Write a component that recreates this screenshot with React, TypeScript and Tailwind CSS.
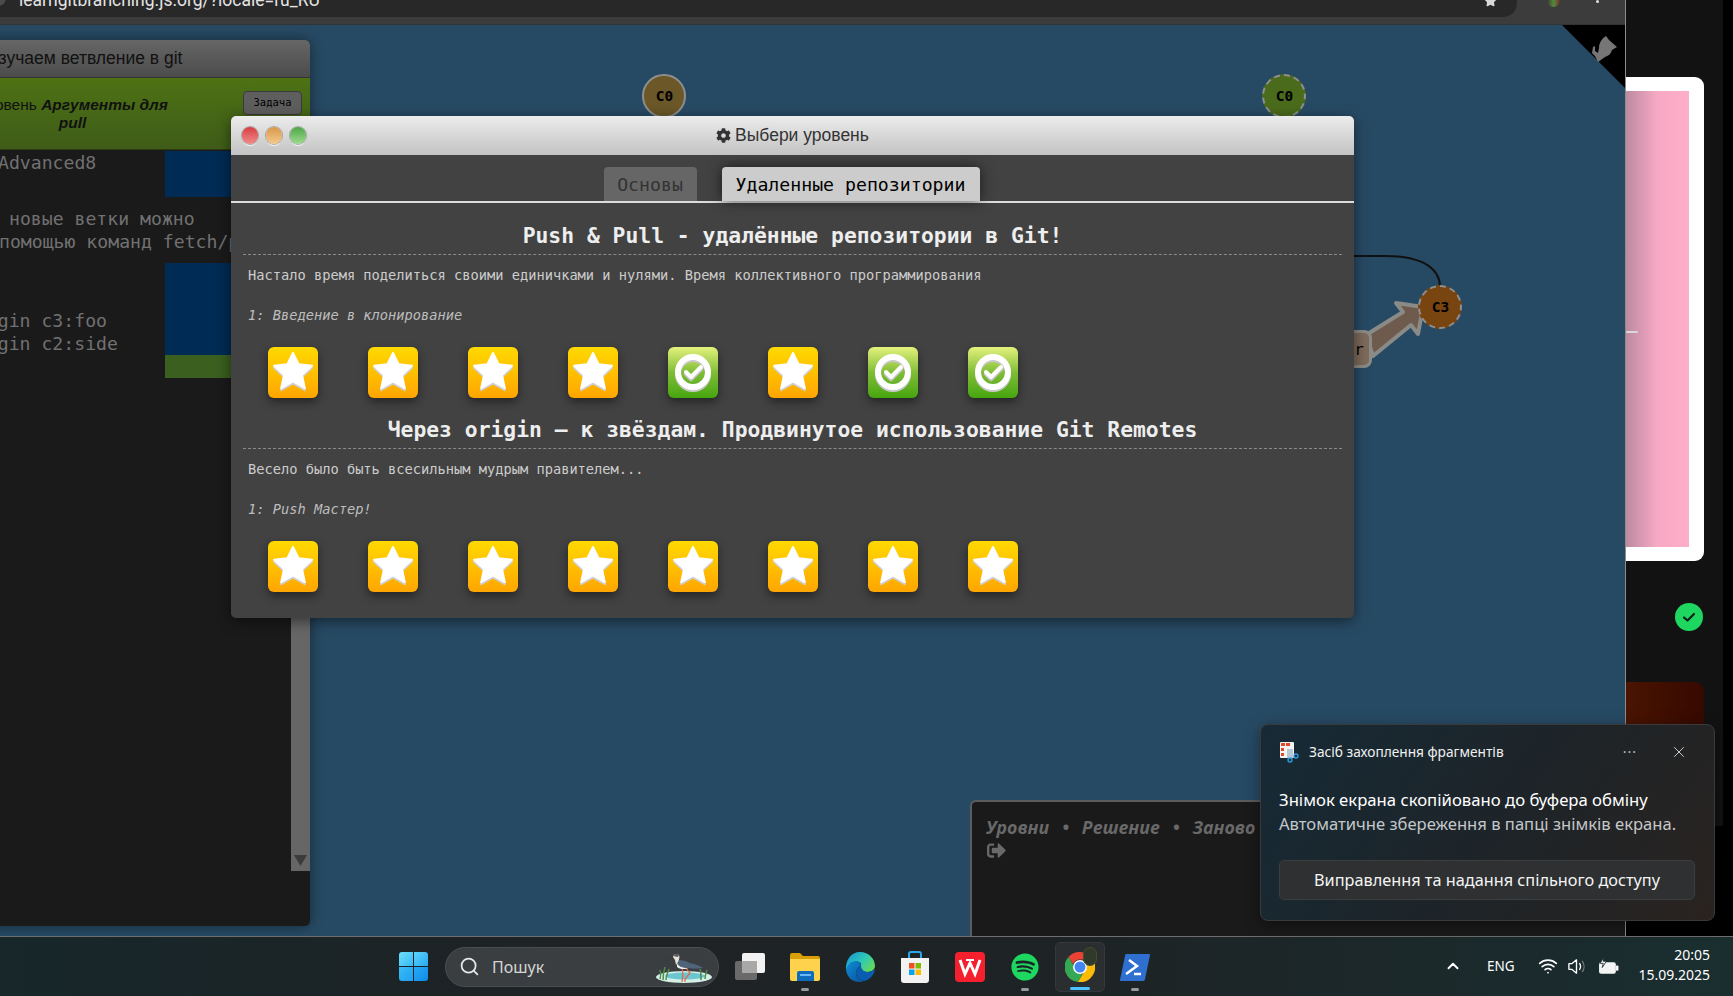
import { ChevronUp, Search, Wifi, X } from "lucide-react";
import { FaCog, FaSignOutAlt, FaSpotify, FaStar } from "react-icons/fa";

const mono = "font-['DejaVu_Sans_Mono',monospace]";

function StarTile() {
  return (
    <div className="w-[50px] h-[51px] rounded-[6px] bg-linear-to-b from-[#ffd900] to-[#ffa500] shadow-[0_4px_10px_rgba(0,0,0,0.45)]">
      <svg viewBox="0 0 50 51" className="w-full h-full">
        <polygon
          points="25,8 30.6,19.3 44,20.8 34,29.9 36.8,43.2 25,36.5 13.2,43.2 16,29.9 6,20.8 19.4,19.3"
          fill="#cfcfd4"
          stroke="#cfcfd4"
          strokeWidth="2"
          strokeLinejoin="round"
        />
        <polygon
          points="25,6 30.6,17.3 44,18.8 34,27.9 36.8,41.2 25,34.5 13.2,41.2 16,27.9 6,18.8 19.4,17.3"
          fill="#fff"
          stroke="#fff"
          strokeWidth="2"
          strokeLinejoin="round"
        />
      </svg>
    </div>
  );
}

function CheckTile() {
  return (
    <div className="w-[50px] h-[51px] rounded-[6px] bg-linear-to-b from-[#e4f27c] via-[#7fbd35] to-[#45a50c] shadow-[0_4px_10px_rgba(0,0,0,0.45)]">
      <svg viewBox="0 0 50 51" className="w-full h-full">
        <circle cx="25" cy="27" r="15" fill="none" stroke="#c9c9c9" strokeWidth="6" />
        <circle cx="25" cy="25" r="15" fill="none" stroke="#fff" strokeWidth="6" />
        <path d="M18 27l5 5 10-10" fill="none" stroke="#c4c4c4" strokeWidth="4.5" strokeLinecap="round" strokeLinejoin="round" />
        <path d="M18 25l5 5 10-10" fill="none" stroke="#fff" strokeWidth="4" strokeLinecap="round" strokeLinejoin="round" />
      </svg>
    </div>
  );
}

function LevelSection({ title, text, level, done }: { title: string; text: string; level: string; done: number[] }) {
  return (
    <section className={mono}>
      <h2 className="h-[52px] pt-[19px] mx-[12px] border-b border-dashed border-[#8a8a8a] text-center text-[21.35px] leading-[28px] font-bold text-[#eeeeee] whitespace-nowrap">
        {title}
      </h2>
      <p className="ml-[17px] mt-[11px] text-[13.7px] leading-[18px] text-[#cccccc] whitespace-nowrap">{text}</p>
      <p className="ml-[17px] mt-[22px] text-[13.7px] leading-[18px] italic text-[#bdbdbd]">{level}</p>
      <div className="flex gap-[50px] ml-[37px] mt-[23px] mb-[-1px]">
        {[0, 1, 2, 3, 4, 5, 6, 7].map((i) => (done.includes(i) ? <CheckTile key={i} /> : <StarTile key={i} />))}
      </div>
    </section>
  );
}

function LevelDialog() {
  return (
    <div className="absolute left-[231px] top-[91px] w-[1123px] h-[502px] rounded-[5px] bg-[#424242] shadow-[0_3px_14px_rgba(0,0,0,0.5)] overflow-hidden">
      <div className="relative h-[39px] bg-linear-to-b from-[#ececec] to-[#c3c3c3] flex items-center justify-center gap-[4px] font-['Liberation_Sans',sans-serif] text-[17.5px] text-[#333333]">
        <div className="absolute left-[11px] top-[11px] flex gap-[8px]">
          <span className="w-[16px] h-[17px] rounded-full bg-linear-to-b from-[#d63a42] to-[#f08a8a] ring-1 ring-[#a8a8a8] shadow-[0_2px_0_#f2f2f2]" />
          <span className="w-[16px] h-[17px] rounded-full bg-linear-to-b from-[#d8994a] to-[#f4c88c] ring-1 ring-[#a8a8a8] shadow-[0_2px_0_#f2f2f2]" />
          <span className="w-[16px] h-[17px] rounded-full bg-linear-to-b from-[#4fa64a] to-[#9bdc8e] ring-1 ring-[#a8a8a8] shadow-[0_2px_0_#f2f2f2]" />
        </div>
        <FaCog className="w-[15px] h-[15px]" />
        <span>Выбери уровень</span>
      </div>
      <div className={`${mono} h-[48px] pt-[12px] pr-[2px] flex justify-center gap-[25px] border-b-2 border-[#dcdcdc] text-[18.2px]`}>
        <div className="w-[93px] h-[34px] rounded-t-[4px] bg-[#666666] text-[#333333] text-center leading-[36px]">Основы</div>
        <div className="w-[258px] h-[34px] rounded-t-[4px] bg-[#cccccc] text-black text-center leading-[36px] shadow-[0_0_14px_rgba(0,0,0,0.6)]">
          Удаленные репозитории
        </div>
      </div>
      <LevelSection
        title="Push & Pull - удалённые репозитории в Git!"
        text="Настало время поделиться своими единичками и нулями. Время коллективного программирования"
        level="1: Введение в клонирование"
        done={[4, 6, 7]}
      />
      <LevelSection
        title="Через origin – к звёздам. Продвинутое использование Git Remotes"
        text="Весело было быть всесильным мудрым правителем..."
        level="1: Push Мастер!"
        done={[]}
      />
    </div>
  );
}

function SideWindow() {
  return (
    <div className="absolute left-[-50px] top-[15px] w-[360px] h-[886px] rounded-[5px] flex flex-col overflow-hidden bg-[#1a1a1a] shadow-[0_0_14px_rgba(0,0,0,0.45)]">
      <div className="h-[38px] shrink-0 pl-[36px] bg-linear-to-b from-[#666666] to-[#4c4c4c] border-b border-[#333333] font-['Liberation_Sans',sans-serif] text-[17.5px] leading-[36px] text-[#111111] whitespace-nowrap">
        Изучаем ветвление в git
      </div>
      <div className="relative h-[72px] shrink-0 bg-linear-to-b from-[#4d7213] to-[#3f5c18] border-b border-[#2c3d12] pl-[20px] pt-[18px]">
        <p className="w-[205px] font-['Liberation_Sans',sans-serif] text-[15.5px] leading-[18px] text-[#111111] text-center">
          Уровень <b className="italic">Аргументы для pull</b>
        </p>
        <button className={`${mono} absolute right-[8px] top-[13px] w-[59px] h-[24px] rounded-[4px] bg-[#5e5e5e] border border-[#3a3a3a] text-[10.5px] text-black`}>
          Задача
        </button>
      </div>
      <div className={`${mono} relative flex-1 text-[18.15px] leading-[23px] text-[#717171] whitespace-pre`}>
        <div className="absolute left-[215px] top-[1px] w-[67px] h-[46px] bg-[#002b54]" />
        <div className="absolute left-[215px] top-[113px] w-[67px] h-[92px] bg-[#002b54]" />
        <div className="absolute left-[215px] top-[205px] w-[67px] h-[23px] bg-[#3a5f1e]" />
        <p className="mt-[1px] ml-[48px]">Advanced8</p>
        <p className="mt-[33px] ml-[59px]">новые ветки можно</p>
        <p className="ml-[49px]">помощью команд fetch/pull</p>
        <p className="mt-[56px] ml-[15px]">origin c3:foo</p>
        <p className="ml-[15px]">origin c2:side</p>
        <div className="absolute right-0 top-0 w-[19px] h-[721px] bg-[#666666]">
          <svg viewBox="0 0 12 10" className="absolute left-[3px] bottom-[5px] w-[13px] h-[11px]">
            <path d="M0 0h12L6 10z" fill="#3b3b3b" />
          </svg>
        </div>
      </div>
    </div>
  );
}

function CommitNode({ label, className }: { label: string; className: string }) {
  return (
    <div className={`absolute w-[44px] h-[44px] pt-px pl-px rounded-full border-2 border-dashed border-[#8f8f8f] flex items-center justify-center ${mono} text-[14.5px] font-bold text-black ${className}`}>
      {label}
    </div>
  );
}

function Canvas() {
  return (
    <>
      <div className="absolute right-0 top-0 w-[63px] h-[63px] bg-black [clip-path:polygon(0_0,100%_0,100%_100%)]" />
      <svg viewBox="0 0 26 27" className="absolute left-[1592px] top-[11px] w-[26px] h-[27px]">
        <path
          fill="#767676"
          d="M14 0L17 4L25 11L20 14C19 18 16 20 13 21L6 26L3 20L0 17L1 11L3 10L3 15L6 17L7 12C7 8 9 3 14 0Z"
        />
      </svg>
      <svg className="absolute inset-0 w-full h-full">
        <path d="M1340 231 H1385 C1425 231 1440 245 1440 262" fill="none" stroke="#111111" strokeWidth="2" />
        <polygon points="1366,310 1403,287 1396,278 1423,282 1418,309 1411,300 1373,331" fill="#6e5b4e" stroke="#8a8a86" strokeWidth="4" strokeLinejoin="round" />
      </svg>
      <div className={`absolute left-[1340px] top-[305px] w-[32px] h-[38px] rounded-[8px] bg-[#7d6a5a] border-[3px] border-[#8a8a86] ${mono} text-[16px] text-right pr-[5px] pt-[5px] text-black`}>
        r
      </div>
      <CommitNode label="C0" className="left-[642px] top-[49px] bg-[#6b5727] border-solid" />
      <CommitNode label="C0" className="left-[1262px] top-[49px] bg-[#4a6b1c]" />
      <CommitNode label="C3" className="left-[1418px] top-[260px] bg-[#784410]" />
    </>
  );
}

function CommandPanel() {
  return (
    <div className="absolute left-[970px] right-0 top-[775px] bottom-0 rounded-tl-[6px] border-l-2 border-t-2 border-[#5c5c5c] bg-[#1a1a1a] pl-[14px] pt-[13px] font-['Open_Sans',sans-serif] text-[#696969]">
      <div className="flex gap-[13px] text-[17.7px] leading-[25px] font-bold italic">
        <span>Уровни</span>
        <span>•</span>
        <span>Решение</span>
        <span>•</span>
        <span>Заново</span>
      </div>
      <FaSignOutAlt className="mt-[1px] w-[21px] h-[19px]" />
    </div>
  );
}

function RightStrip() {
  return (
    <div className="relative w-[107px] shrink-0 bg-black">
      <div className="h-[826px] w-[97px] bg-[#121212] pt-[77px] flex flex-col">
        <div className="relative w-[78px] h-[484px] rounded-r-[9px] bg-white pt-[14px]">
          <div className="w-[63px] h-[456px] bg-linear-to-r from-[#bd8aa0] via-[#f7a9c4] to-[#ffaec9]" />
          <div className="absolute left-0 top-[254px] w-[12px] h-[2px] rounded-full bg-[#d8d8d8]" />
        </div>
        <div className="ml-[49px] mt-[42px] w-[28px] h-[28px] rounded-full bg-[#1ed760] flex items-center justify-center">
          <svg viewBox="0 0 16 16" className="w-[16px] h-[16px]">
            <path d="M3 8.500l3.500 3L13 5" fill="none" stroke="#10201a" strokeWidth="2.200" strokeLinecap="round" strokeLinejoin="round" />
          </svg>
        </div>
        <div className="mt-[51px] w-[78px] h-[70px] rounded-tr-[9px] bg-linear-to-r from-[#4a1400] to-[#360900]" />
      </div>
    </div>
  );
}

function SnipToast() {
  return (
    <div className="absolute left-[1260px] top-[724px] w-[455px] h-[197px] rounded-[8px] border border-[#3a3a3a] bg-[linear-gradient(125deg,#162a36_0%,#1e2428_55%,#2a2320_100%)] shadow-[0_4px_16px_rgba(0,0,0,0.4)] px-[18px] font-['Noto_Sans',sans-serif] text-white">
      <div className="h-[54px] flex items-center text-[13.7px] text-[#f0f0f0]">
        <svg viewBox="0 0 20 22" className="w-[20px] h-[22px] mr-[10px]">
          <rect x="1" y="1" width="14" height="16" rx="1" fill="#f4f4f4" />
          <path d="M2 2h4v3H2zM2 7h3v3H2zM2 12h3v3H2zM7 2h4v3H7z" fill="#e0492a" />
          <path d="M8 8h6v9H8z" fill="#b9c6d4" />
          <circle cx="11" cy="19" r="2" fill="none" stroke="#2b9be0" strokeWidth="1.400" />
          <circle cx="17" cy="15" r="2" fill="none" stroke="#2b9be0" strokeWidth="1.400" />
        </svg>
        <span>Засіб захоплення фрагментів</span>
        <span className="ml-auto mr-[33px] text-[14px] leading-none text-[#bdbdbd] tracking-[1px]">···</span>
        <X className="w-[18px] h-[18px] mr-[8px] text-[#cfcfcf]" strokeWidth={1.3} />
      </div>
      <p className="mt-[9px] text-[16.7px] leading-[24px] whitespace-nowrap">Знімок екрана скопійовано до буфера обміну</p>
      <p className="text-[16.6px] leading-[24px] text-[#c4c7c9] whitespace-nowrap">Автоматичне збереження в папці знімків екрана.</p>
      <button className="mt-[24px] w-[416px] h-[40px] rounded-[5px] bg-[#2e3032] border border-[#3b3d3f] text-[16.3px] text-[#f4f4f4]">
        Виправлення та надання спільного доступу
      </button>
    </div>
  );
}

function TaskIcon({ children, dot, active }: { children: React.ReactNode; dot?: boolean; active?: boolean }) {
  return (
    <div className={`relative w-[50px] h-[50px] rounded-[5px] flex items-center justify-center mr-[5px] ${active ? "bg-[#2a2e31] border border-[#33383b]" : ""}`}>
      {children}
      {dot && <span className="absolute bottom-[1px] left-[21px] w-[8px] h-[3px] rounded-full bg-[#9a9a9a]" />}
      {active && <span className="absolute bottom-[1px] left-[14px] w-[20px] h-[3px] rounded-full bg-[#4cc2ff]" />}
    </div>
  );
}

function Taskbar() {
  return (
    <div className="relative h-[60px] shrink-0 border-t border-[#6e6e6e] bg-[linear-gradient(90deg,#17272a_0%,#1f2224_35%,#1d2426_65%,#1a2e30_100%)] flex items-center font-['Noto_Sans',sans-serif]">
      <div className="ml-[399px] w-[29px] h-[29px] grid grid-cols-2 gap-[1px]">
        <span className="rounded-tl-[3px] bg-linear-to-br from-[#6fe0fb] to-[#32b8f5]" />
        <span className="rounded-tr-[3px] bg-linear-to-br from-[#5cd3fa] to-[#25a9f2]" />
        <span className="rounded-bl-[3px] bg-linear-to-br from-[#3bbcf8] to-[#1c9ff0]" />
        <span className="rounded-br-[3px] bg-linear-to-br from-[#27aaf5] to-[#108be8]" />
      </div>
      <div className="relative ml-[17px] w-[274px] h-[40px] rounded-full bg-[#3a3e40] border border-[#4a4e50] flex items-center pl-[13px] text-[16px] text-[#d6d6d6]">
        <Search className="w-[21px] h-[21px] text-[#e6e6e6] mr-[12px]" strokeWidth={2} />
        <span>Пошук</span>
        <svg viewBox="0 0 58 32" className="absolute right-[5px] top-[4px] w-[58px] h-[32px]">
          <ellipse cx="29" cy="25" rx="28" ry="6" fill="#d3efe6" />
          <ellipse cx="30" cy="24" rx="20" ry="3.500" fill="#6cc6d0" />
          <path d="M8 28c0-6 1-10 2-13M11 28c0-5 2-7 3-11M5 27c1-3 1-6 0-9M46 28c0-5 0-8-1-11M50 27c0-4 1-6 2-9" stroke="#4f8a4a" strokeWidth="1.500" fill="none" />
          <path d="M30 15l5 6-5 6v3M27 15l1 7-1 8" stroke="#e0654a" strokeWidth="1.200" fill="none" />
          <path d="M23 8c4 0 8 1 12 3 4 1 9 2 13 5-6 1-11 1-15 0-5 1-10-1-11-4z" fill="#4f6478" />
          <path d="M22 11c1 3 5 5 11 5-3 2-9 1-11-1z" fill="#f0f0f0" />
          <path d="M18 5c0-3 4-4 6-2 1 2 0 5-1 7l-2 3-1-5z" fill="#e6e2d8" />
          <path d="M18 4c2-3 5-2 6-1l-1 2z" fill="#5a5a5a" />
          <path d="M18 6L9 9" stroke="#3a3a3a" strokeWidth="1" />
        </svg>
      </div>
      <div className="ml-[6px] flex">
        <TaskIcon>
          <div className="relative w-[30px] h-[27px]">
            <span className="absolute left-0 bottom-0 w-[22px] h-[19px] rounded-[2px] bg-[#6a6a6a]" />
            <span className="absolute right-0 top-0 w-[23px] h-[20px] rounded-[2px] bg-[#f2f2f2]" />
            <span className="absolute left-[7px] top-[8px] w-[15px] h-[12px] bg-[#a8a8a8]" />
          </div>
        </TaskIcon>
        <TaskIcon dot>
          <svg viewBox="0 0 30 28" className="w-[30px] h-[28px]">
            <path d="M0 2a2 2 0 012-2h8l3 3h15a2 2 0 012 2v4H0z" fill="#d99f06" />
            <path d="M0 6h30v20a2 2 0 01-2 2H2a2 2 0 01-2-2z" fill="#ffd24d" />
            <path d="M7 20a2 2 0 012-2h13a2 2 0 012 2v8H7z" fill="#0f6cbd" />
            <rect x="10" y="21" width="11" height="2" fill="#6ab8f0" />
          </svg>
        </TaskIcon>
        <TaskIcon>
          <svg viewBox="0 0 30 30" className="w-[30px] h-[30px]">
            <defs>
              <linearGradient id="edge-a" x1="0" y1="0" x2="1" y2="0.6">
                <stop offset="0" stopColor="#1490d8" />
                <stop offset="0.6" stopColor="#2fc8b8" />
                <stop offset="1" stopColor="#5fd860" />
              </linearGradient>
              <linearGradient id="edge-b" x1="0" y1="0" x2="1" y2="1">
                <stop offset="0" stopColor="#0c8fd8" />
                <stop offset="1" stopColor="#0c4f98" />
              </linearGradient>
            </defs>
            <path d="M15 0c9 0 15 7 15 14 0 3-3 6-8 6-3 0-6-2-6-4 0-4 1-6-4-6C6 10 2 14 1 19 0 8 6 0 15 0z" fill="url(#edge-a)" />
            <path d="M1 18c1-5 5-9 10-9 3 0 5 2 5 5-3 1-5 4-5 7 0 4 3 7 8 8-2 1-3 1-5 1C7 30 2 25 1 18z" fill="url(#edge-b)" />
            <path d="M16 14c0 3 3 6 7 6 3 0 5-1 7-3-1 7-6 11-11 12-5-1-8-4-8-8 0-3 2-6 5-7z" fill="#0a5cb0" />
          </svg>
        </TaskIcon>
        <TaskIcon>
          <svg viewBox="0 0 30 32" className="w-[30px] h-[32px]">
            <path d="M9 7V3a2 2 0 012-2h8a2 2 0 012 2v4" fill="none" stroke="#2aa7e8" strokeWidth="2" />
            <path d="M1 7h28v22a3 3 0 01-3 3H4a3 3 0 01-3-3z" fill="#f2f2f2" />
            <rect x="9" y="12" width="5.500" height="5.500" fill="#f25022" />
            <rect x="15.500" y="12" width="5.500" height="5.500" fill="#7fba00" />
            <rect x="9" y="18.500" width="5.500" height="5.500" fill="#00a4ef" />
            <rect x="15.500" y="18.500" width="5.500" height="5.500" fill="#ffb900" />
          </svg>
        </TaskIcon>
        <TaskIcon>
          <svg viewBox="0 0 30 30" className="w-[30px] h-[30px]">
            <rect width="30" height="30" rx="4" fill="#f5202e" />
            <path d="M5 8l5 14 5-11 5 11 5-14" fill="none" stroke="#fff" strokeWidth="3" />
            <path d="M11 8h8" stroke="#fff" strokeWidth="2" />
          </svg>
        </TaskIcon>
        <TaskIcon dot>
          <FaSpotify className="w-[28px] h-[28px] text-[#1ed760]" />
        </TaskIcon>
        <TaskIcon active>
          <svg viewBox="0 0 30 30" className="w-[30px] h-[30px]">
            <path d="M15 0a15 15 0 0113 7.500H15a7.500 7.500 0 00-7 4.800L3.500 5A15 15 0 0115 0z" fill="#ea4335" />
            <path d="M3.500 5L10 16a7.500 7.500 0 007.500 6L13 30A15 15 0 013.500 5z" fill="#34a853" />
            <path d="M28 7.500A15 15 0 0113 30l6.500-11a7.500 7.500 0 00-1-11.500z" fill="#fbbc05" />
            <circle cx="15" cy="15" r="7" fill="#fff" />
            <circle cx="15" cy="15" r="5.500" fill="#4285f4" />
          </svg>
          <span className="absolute left-[27px] top-[4px] w-[14px] h-[19px] rounded-full bg-[#2f3a2a] border border-[#4d4a2c]" />
        </TaskIcon>
        <TaskIcon dot>
          <svg viewBox="0 0 30 28" className="w-[30px] h-[28px]">
            <path d="M6 1h23a1 1 0 011 1.200L25 26a2 2 0 01-2 2H1a1 1 0 01-1-1.200L5 3a2 2 0 011-2z" fill="#2f6fd0" />
            <path d="M9 7l8 6-11 8" fill="none" stroke="#fff" strokeWidth="2.500" />
            <path d="M14 21h7" stroke="#fff" strokeWidth="2.500" />
          </svg>
        </TaskIcon>
      </div>
      <ChevronUp className="absolute left-[1444px] top-[20px] w-[18px] h-[18px] text-white" strokeWidth={2.5} />
      <span className="absolute left-[1487px] top-[19px] text-[13.500px] text-white">ENG</span>
      <Wifi className="absolute left-[1538px] top-[19px] w-[20px] h-[20px] text-white" strokeWidth={2} />
      <svg viewBox="0 0 20 20" className="absolute left-[1567px] top-[20px] w-[19px] h-[19px]">
        <path d="M2 7h3l5-4v14l-5-4H2z" fill="none" stroke="#fff" strokeWidth="1.400" strokeLinejoin="round" />
        <path d="M13 6.500c1.500 2 1.500 5 0 7" fill="none" stroke="#fff" strokeWidth="1.400" />
        <path d="M16 4c2.500 3.500 2.500 8.500 0 12" fill="none" stroke="#777" strokeWidth="1.400" />
      </svg>
      <svg viewBox="0 0 20 16" className="absolute left-[1598px] top-[21px] w-[21px] h-[17px]">
        <rect x="1" y="4" width="16" height="11" rx="2" fill="#f4f4f4" />
        <rect x="17" y="7" width="2.500" height="5" rx="1" fill="#f4f4f4" />
        <path d="M5 0L2 5h3l-1 4 4-6H5z" fill="#f4f4f4" stroke="#1b2c2e" strokeWidth="0.800" />
      </svg>
      <div className="absolute right-[23px] top-[8px] text-right text-[14px] leading-[20px] text-white">
        <div>20:05</div>
        <div>15.09.2025</div>
      </div>
    </div>
  );
}

export default function App() {
  return (
    <div className="relative w-[1733px] h-[996px] overflow-hidden flex flex-col bg-black">
      <div className="flex flex-1 min-h-0">
        <div className="flex-1 min-w-0 flex flex-col border-r border-[#8c8c8c]">
          <div className="relative h-[25px] shrink-0 bg-[#3c3c3c] border-b border-[#333333]">
            <div className="absolute left-0 top-0 w-[1517px] h-[17px] rounded-br-[14px] bg-[#282828] overflow-hidden">
              <span className="absolute left-[19px] top-[-13px] font-['Roboto',sans-serif] text-[17.5px] text-[#e4e4e4] whitespace-nowrap">
                learngitbranching.js.org/?locale=ru_RU
              </span>
              <span className="absolute left-[-10px] top-[-10px] w-[16px] h-[16px] rounded-full bg-[#4a4a4a]" />
              <FaStar className="absolute left-[1484px] top-[-6px] w-[13px] h-[13px] text-[#d8d8d8]" />
            </div>
            <span className="absolute left-[1547px] top-[-6px] w-[13px] h-[13px] rounded-full bg-linear-to-r from-[#3a3a2c] via-[#4f8a40] to-[#6a2a20]" />
            <span className="absolute left-[1596px] top-0 w-[3px] h-[3px] rounded-full bg-[#e0e0e0]" />
          </div>
          <div className="relative flex-1 min-h-0 bg-[#274a64]">
            <Canvas />
            <SideWindow />
            <CommandPanel />
            <LevelDialog />
          </div>
        </div>
        <RightStrip />
      </div>
      <Taskbar />
      <SnipToast />
    </div>
  );
}
